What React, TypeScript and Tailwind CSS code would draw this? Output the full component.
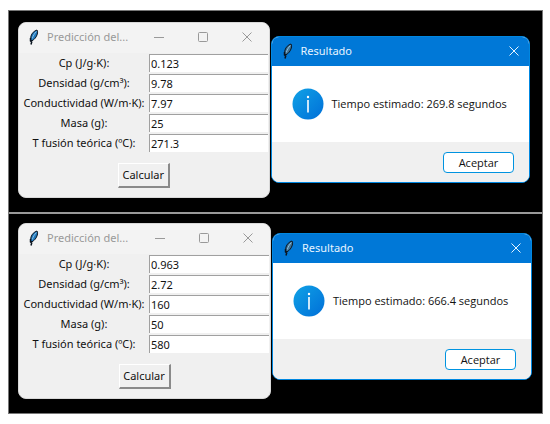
import React, { useId } from 'react';

interface Run {
  cp: string;
  density: string;
  conductivity: string;
  mass: string;
  melting: string;
  result: string;
}

const runs: Run[] = [
  { cp: '0.123', density: '9.78', conductivity: '7.97', mass: '25', melting: '271.3', result: '269.8' },
  { cp: '0.963', density: '2.72', conductivity: '160', mass: '50', melting: '580', result: '666.4' },
];

export default function App() {
  return (
    <div className="min-h-screen bg-white pt-[10px] pr-[7px] pb-[10px] pl-2 font-['Noto_Sans','Open_Sans',sans-serif]">
      <main className="divide-y-2 divide-[#999] border border-[#777] bg-black">
        <section className="grid grid-cols-[252fr_260fr] items-start gap-px pt-[11px] pr-3 pb-[14px] pl-[9px]">
          <PredictionWindow run={runs[0]} />
          <div className="pt-[14px]">
            <ResultDialog value={runs[0].result} />
          </div>
        </section>
        <section className="grid grid-cols-[253fr_260fr] items-start gap-px pt-[9px] pr-[10px] pb-[14px] pl-[9px]">
          <PredictionWindow run={runs[1]} />
          <div className="pt-[10px]">
            <ResultDialog value={runs[1].result} />
          </div>
        </section>
      </main>
    </div>
  );
}

function PredictionWindow({ run }: { run: Run }) {
  return (
    <form className="overflow-hidden rounded-lg border border-[#d8d8d8] bg-[#f0f0f0]" onSubmit={(e) => e.preventDefault()}>
      {/* Title bar */}
      <header className="flex h-[30px] items-center bg-[#f3f3f3] pb-[2px] pl-[9px] text-[#999]">
        <Feather className="h-4 w-3" fill="#1f78bd" />
        <h1 className="ml-[7px] flex-1 text-[11px] leading-4">Predicción del...</h1>
        <button type="button" aria-label="Minimizar" className="flex w-11 justify-center">
          <svg viewBox="0 0 12 12" className="size-3" fill="none" stroke="currentColor">
            <path d="M1 6.5h10" />
          </svg>
        </button>
        <button type="button" aria-label="Maximizar" className="flex w-11 justify-center">
          <svg viewBox="0 0 12 12" className="size-3" fill="none" stroke="currentColor">
            <rect x="1.5" y="1.5" width="9" height="9" rx="1" />
          </svg>
        </button>
        <button type="button" aria-label="Cerrar" className="flex w-11 justify-center">
          <CloseIcon />
        </button>
      </header>

      <div className="flex flex-col gap-[2px] pt-px pr-px">
        <Field label="Cp (J/g·K):" value={run.cp} />
        <Field label="Densidad (g/cm³):" value={run.density} />
        <Field label="Conductividad (W/m·K):" value={run.conductivity} />
        <Field label="Masa (g):" value={run.mass} />
        <Field label="T fusión teórica (ºC):" value={run.melting} />
      </div>

      <div className="flex justify-center pt-[11px] pb-[9px]">
        <button
          type="submit"
          className="h-[25px] w-[52px] border-t border-r-2 border-b-2 border-l border-t-white border-r-[#8a8a8a] border-b-[#8a8a8a] border-l-white bg-[#f0f0f0] text-[11px] leading-4 text-[#111]"
        >
          Calcular
        </button>
      </div>
    </form>
  );
}

function Field({ label, value }: { label: string; value: string }) {
  const id = useId();

  return (
    <div className="flex h-[18px] items-center">
      <label htmlFor={id} className="w-[130px] text-center text-[11px] leading-4 whitespace-nowrap text-[#111]">
        {label}
      </label>
      <input
        id={id}
        defaultValue={value}
        className="h-[18px] min-w-0 flex-1 border-t border-l border-[#a0a0a0] bg-white pl-px text-[11px] leading-4 text-[#111] outline-none"
      />
    </div>
  );
}

function ResultDialog({ value }: { value: string }) {
  return (
    <div role="dialog" aria-label="Resultado" className="overflow-hidden rounded-lg border border-[#0087e0] bg-white">
      <header className="flex h-[29px] items-center bg-[#0078d7] pb-px pl-[10px] text-[#e6f4ff]">
        <Feather className="h-4 w-3" fill="#3f7396" />
        <h2 className="ml-[7px] flex-1 text-[11px] leading-4">Resultado</h2>
        <button type="button" aria-label="Cerrar" className="flex w-[30px] justify-center">
          <CloseIcon />
        </button>
      </header>
      <div className="flex h-[76px] items-center gap-2 pl-5">
        <InfoIcon />
        <p className="font-['Open_Sans','Noto_Sans',sans-serif] text-[11px] leading-4 whitespace-nowrap text-[#111]">
          Tiempo estimado: {value} segundos
        </p>
      </div>
      <footer className="flex justify-end bg-[#f0f0f0] pt-[10px] pr-[15px] pb-[9px]">
        <button
          type="button"
          className="h-[21px] w-[71px] rounded border border-[#0093e0] bg-white font-['Open_Sans','Noto_Sans',sans-serif] text-[11px] leading-4 text-[#111]"
        >
          Aceptar
        </button>
      </footer>
    </div>
  );
}

function Feather({ className, fill }: { className: string; fill: string }) {
  return (
    <svg viewBox="0 0 12 16" className={className}>
      <path d="M9 1C6 2 4 4 3 7l-.5 4 1.500.8C6.500 10.500 8.500 8 9.300 5 9.700 3.500 9.700 2 9 1z" fill={fill} stroke="#0b1520" />
      <path d="M8.300 2.500C6.500 4.500 5 7 4.300 9.500" fill="none" stroke="#a5d2ee" strokeWidth="0.800" />
      <path d="M2.500 9v3l1.200 1L3 15.500" fill="none" stroke="#0b1520" strokeWidth="1.500" />
    </svg>
  );
}

function CloseIcon() {
  return (
    <svg viewBox="0 0 12 12" className="size-3" fill="none" stroke="currentColor">
      <path d="M1.500 1.500l9 9M10.500 1.500l-9 9" />
    </svg>
  );
}

function InfoIcon() {
  const id = useId();

  return (
    <svg viewBox="0 0 32 32" className="size-8 shrink-0">
      <defs>
        <linearGradient id={id} x1="0" y1="0" x2="1" y2="1">
          <stop offset="0" stopColor="#10a2e6" />
          <stop offset="1" stopColor="#006fd8" />
        </linearGradient>
      </defs>
      <circle cx="16" cy="16" r="15.500" fill={`url(#${id})`} />
      <circle cx="16" cy="9" r="1.200" fill="#fff" />
      <path d="M16 12v12.500" stroke="#fff" strokeWidth="1.600" />
    </svg>
  );
}
